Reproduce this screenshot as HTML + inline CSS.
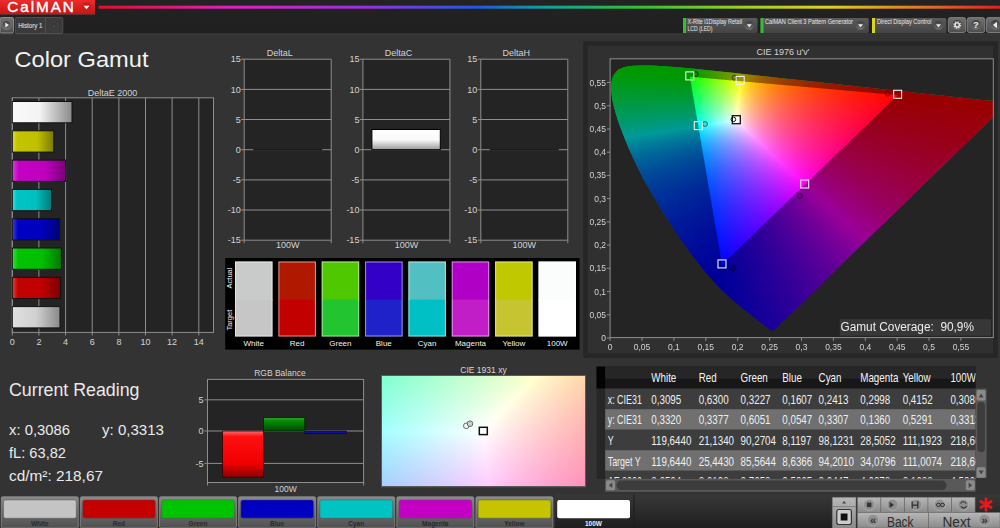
<!DOCTYPE html>
<html><head><meta charset="utf-8">
<style>
html,body{margin:0;padding:0;width:1000px;height:528px;overflow:hidden;background:#333;}
body{position:relative;font-family:"Liberation Sans",sans-serif;}
svg.l{position:absolute;left:0;top:0;}
canvas{position:absolute;}
text{font-family:"Liberation Sans",sans-serif;}
</style></head><body>
<svg class="l" width="1000" height="528" viewBox="0 0 1000 528">
<defs>
  <linearGradient id="topbar" x1="0" y1="0" x2="0" y2="1">
    <stop offset="0" stop-color="#232323"/><stop offset="1" stop-color="#1f1f1f"/>
  </linearGradient>
  <linearGradient id="redbtn" x1="0" y1="0" x2="0" y2="1">
    <stop offset="0" stop-color="#ec2c2c"/><stop offset="1" stop-color="#c81414"/>
  </linearGradient>
  <linearGradient id="rainbow" x1="98" y1="0" x2="1000" y2="0" gradientUnits="userSpaceOnUse">
    <stop offset="0" stop-color="#e0102c"/>
    <stop offset="0.146" stop-color="#e020c0"/>
    <stop offset="0.296" stop-color="#9a30e0"/>
    <stop offset="0.42" stop-color="#2058e0"/>
    <stop offset="0.495" stop-color="#10a0a0"/>
    <stop offset="0.596" stop-color="#30c030"/>
    <stop offset="0.72" stop-color="#a0d020"/>
    <stop offset="0.81" stop-color="#e0d020"/>
    <stop offset="0.92" stop-color="#e07020"/>
    <stop offset="1" stop-color="#e02020"/>
  </linearGradient>
  <linearGradient id="icirc" x1="0" y1="0" x2="0" y2="1"><stop offset="0" stop-color="#3e3e3e"/><stop offset="1" stop-color="#6e6e6e"/></linearGradient>
  <linearGradient id="gbtn" x1="0" y1="0" x2="0" y2="1">
    <stop offset="0" stop-color="#707070"/><stop offset="1" stop-color="#4e4e4e"/>
  </linearGradient>
  <linearGradient id="ddbtn" x1="0" y1="0" x2="0" y2="1">
    <stop offset="0" stop-color="#5a5a5a"/><stop offset="1" stop-color="#444"/>
  </linearGradient>
  <linearGradient id="barW" x1="0" y1="0" x2="1" y2="0">
    <stop offset="0" stop-color="#fafafa"/><stop offset="0.45" stop-color="#f4f4f4"/><stop offset="1" stop-color="#8a8a8a"/>
  </linearGradient>
  <linearGradient id="barY" x1="0" y1="0" x2="1" y2="0">
    <stop offset="0" stop-color="#dada40"/><stop offset="0.12" stop-color="#c4c400"/><stop offset="0.6" stop-color="#c0c000"/><stop offset="1" stop-color="#7a7a00"/>
  </linearGradient>
  <linearGradient id="barM" x1="0" y1="0" x2="1" y2="0">
    <stop offset="0" stop-color="#da40da"/><stop offset="0.12" stop-color="#c400c4"/><stop offset="0.6" stop-color="#c000c0"/><stop offset="1" stop-color="#7a007a"/>
  </linearGradient>
  <linearGradient id="barC" x1="0" y1="0" x2="1" y2="0">
    <stop offset="0" stop-color="#40dada"/><stop offset="0.12" stop-color="#00c4c4"/><stop offset="0.6" stop-color="#00c0c0"/><stop offset="1" stop-color="#007a7a"/>
  </linearGradient>
  <linearGradient id="barB" x1="0" y1="0" x2="1" y2="0">
    <stop offset="0" stop-color="#4040da"/><stop offset="0.12" stop-color="#0000c4"/><stop offset="0.6" stop-color="#0000c0"/><stop offset="1" stop-color="#00007a"/>
  </linearGradient>
  <linearGradient id="barG" x1="0" y1="0" x2="1" y2="0">
    <stop offset="0" stop-color="#40da40"/><stop offset="0.12" stop-color="#00c400"/><stop offset="0.6" stop-color="#00c000"/><stop offset="1" stop-color="#007a00"/>
  </linearGradient>
  <linearGradient id="barR" x1="0" y1="0" x2="1" y2="0">
    <stop offset="0" stop-color="#da4040"/><stop offset="0.12" stop-color="#c40000"/><stop offset="0.6" stop-color="#c00000"/><stop offset="1" stop-color="#7a0000"/>
  </linearGradient>
  <linearGradient id="barL" x1="0" y1="0" x2="1" y2="0">
    <stop offset="0" stop-color="#e0e0e0"/><stop offset="0.5" stop-color="#d0d0d0"/><stop offset="1" stop-color="#8a8a8a"/>
  </linearGradient>
  <linearGradient id="barDC" x1="0" y1="0" x2="0" y2="1">
    <stop offset="0" stop-color="#ffffff"/><stop offset="0.5" stop-color="#fafafa"/><stop offset="1" stop-color="#9a9a9a"/>
  </linearGradient>
  <linearGradient id="rgbR" x1="0" y1="0" x2="0" y2="1">
    <stop offset="0" stop-color="#ff6a6a"/><stop offset="0.12" stop-color="#ff1010"/><stop offset="0.7" stop-color="#f00000"/><stop offset="1" stop-color="#8a0000"/>
  </linearGradient>
  <linearGradient id="rgbG" x1="0" y1="0" x2="0" y2="1">
    <stop offset="0" stop-color="#30a030"/><stop offset="0.3" stop-color="#008a00"/><stop offset="1" stop-color="#004a00"/>
  </linearGradient>
  <linearGradient id="btmbg" x1="0" y1="0" x2="0" y2="1">
    <stop offset="0" stop-color="#383838"/><stop offset="1" stop-color="#1e1e1e"/>
  </linearGradient>
  <linearGradient id="swbtn" x1="0" y1="0" x2="0" y2="1">
    <stop offset="0" stop-color="#8a8a8a"/><stop offset="0.5" stop-color="#6a6a6a"/><stop offset="1" stop-color="#505050"/>
  </linearGradient>
  <linearGradient id="ctlbtn" x1="0" y1="0" x2="0" y2="1">
    <stop offset="0" stop-color="#b8b8b8"/><stop offset="1" stop-color="#8a8a8a"/>
  </linearGradient>
</defs>

<!-- top bar -->
<rect x="0" y="0" width="1000" height="33.5" fill="url(#topbar)"/>
<rect x="0" y="33.5" width="1000" height="1" fill="#3c3c3c"/>
<rect x="0" y="0" width="95" height="14.5" fill="url(#redbtn)"/>
<rect x="0" y="14" width="95" height="1" fill="#5a3030"/>
<text x="7.3" y="12.4" font-size="15.3" fill="#fff" stroke="#fff" stroke-width="0.4" textLength="66.5" lengthAdjust="spacing">CalMAN</text>
<circle cx="86.5" cy="7.2" r="5" fill="#d01a1a"/>
<path d="M83.6 5.8 L89.4 5.8 L86.5 9.2 Z" fill="#fff"/>
<rect x="98.5" y="5.7" width="901.5" height="3" fill="url(#rainbow)"/>

<!-- tabs -->
<rect x="0" y="17.5" width="13.5" height="15.5" rx="1.5" fill="url(#gbtn)" stroke="#9a9a9a" stroke-width="0.8"/>
<circle cx="6.6" cy="25" r="4.6" fill="url(#icirc)" stroke="#8a8a8a" stroke-width="0.5"/>
<path d="M5.3 22.4 L8.9 25 L5.3 27.6 Z" fill="#eee"/>
<rect x="15.3" y="17.5" width="47.5" height="16" rx="1.2" fill="#3a3a3a" stroke="#5e5e5e" stroke-width="0.7"/>
<line x1="45.5" y1="17.8" x2="45.5" y2="33" stroke="#5e5e5e" stroke-width="0.6"/>
<text x="18.2" y="28.3" font-size="7.2" fill="#d0d0d0" stroke="#d0d0d0" stroke-width="0.2" textLength="24.2" lengthAdjust="spacingAndGlyphs">History 1</text>
<circle cx="53.8" cy="26" r="4.2" fill="#383838" stroke="#4a4a4a" stroke-width="0.7"/>
<text x="53.8" y="28.3" font-size="6" fill="#5a5a5a" text-anchor="middle">+</text>

<!-- dropdowns -->
<g>
  <rect x="683" y="18" width="74.6" height="15" rx="1.5" fill="url(#ddbtn)"/>
  <rect x="683" y="18" width="3" height="15" fill="#30c030"/>
  <text x="687.5" y="24.3" font-size="6.6" fill="#e8e8e8" textLength="54.6" lengthAdjust="spacingAndGlyphs">X-Rite i1Display Retail</text>
  <text x="687.5" y="31.2" font-size="6.6" fill="#e8e8e8" textLength="25" lengthAdjust="spacingAndGlyphs">LCD (LED)</text>
  <circle cx="749.3" cy="25.5" r="4.6" fill="url(#icirc)"/>
  <path d="M746.8 24.3 L751.8 24.3 L749.3 27.3 Z" fill="#eee"/>

  <rect x="760.5" y="18" width="108.3" height="15" rx="1.5" fill="url(#ddbtn)"/>
  <rect x="760.5" y="18" width="3" height="15" fill="#30c030"/>
  <text x="765" y="24.3" font-size="6.6" fill="#e8e8e8" textLength="88" lengthAdjust="spacingAndGlyphs">CalMAN Client 3 Pattern Generator</text>
  <circle cx="860.5" cy="25.5" r="4.6" fill="url(#icirc)"/>
  <path d="M858 24.3 L863 24.3 L860.5 27.3 Z" fill="#eee"/>

  <rect x="872" y="18" width="74.4" height="15" rx="1.5" fill="url(#ddbtn)"/>
  <rect x="872" y="18" width="3" height="15" fill="#d8d820"/>
  <text x="877" y="24.3" font-size="6.6" fill="#e8e8e8" textLength="54.4" lengthAdjust="spacingAndGlyphs">Direct Display Control</text>
  <circle cx="938.5" cy="25.5" r="4.6" fill="url(#icirc)"/>
  <path d="M936 24.3 L941 24.3 L938.5 27.3 Z" fill="#eee"/>

  <rect x="948.3" y="17.6" width="17.4" height="14.9" rx="2.2" fill="url(#gbtn)" stroke="#8c8c8c" stroke-width="0.8"/>
  <circle cx="957.2" cy="25" r="4.9" fill="url(#icirc)"/>
  <circle cx="957.2" cy="25" r="2.1" fill="none" stroke="#e8e8e8" stroke-width="1.4"/>
  <circle cx="957.2" cy="25" r="3.2" fill="none" stroke="#e8e8e8" stroke-width="1.3" stroke-dasharray="1.26 1.25"/>
  <rect x="967.2" y="17.6" width="17.6" height="14.9" rx="2.2" fill="url(#gbtn)" stroke="#8c8c8c" stroke-width="0.8"/>
  <circle cx="976" cy="25" r="4.9" fill="url(#icirc)"/>
  <text x="976" y="28.4" font-size="9.5" font-weight="bold" fill="#eee" text-anchor="middle">?</text>
  <rect x="986.4" y="17.6" width="16" height="14.9" rx="2.2" fill="url(#gbtn)" stroke="#8c8c8c" stroke-width="0.8"/>
  <circle cx="995.3" cy="25" r="4.9" fill="url(#icirc)"/>
  <path d="M996.2 22.3 L993 25 L996.2 27.7 Z M996.2 22.3 H997 V27.7 H996.2 Z" fill="#eee"/>
</g>

<!-- Title -->
<text x="14.5" y="67" font-size="22.5" fill="#f2f2f2" textLength="134" lengthAdjust="spacingAndGlyphs">Color Gamut</text>

<!-- DeltaE 2000 chart -->
<text x="112.5" y="95.5" font-size="9" fill="#d4d4d4" text-anchor="middle">DeltaE 2000</text>
<rect x="12.3" y="97.8" width="201.2" height="234.6" fill="#242424"/>
<g stroke="#8e8e8e" stroke-width="1" fill="none">
  <path d="M38.9 97.8V335.5 M65.6 97.8V335.5 M92.2 97.8V335.5 M118.9 97.8V335.5 M145.5 97.8V335.5 M172.1 97.8V335.5 M198.8 97.8V335.5 M12.3 97.8V335.5"/>
  <rect x="12.3" y="97.8" width="201.2" height="234.6"/>
</g>
<g font-size="9" fill="#d4d4d4" text-anchor="middle"><text x="12.3" y="345">0</text><text x="38.9" y="345">2</text><text x="65.6" y="345">4</text><text x="92.2" y="345">6</text><text x="118.9" y="345">8</text><text x="145.5" y="345">10</text><text x="172.1" y="345">12</text><text x="198.8" y="345">14</text></g>
<g stroke="#111" stroke-width="1"><rect x="12.3" y="101.5" width="59.7" height="21.3" fill="url(#barW)"/><rect x="12.3" y="130.8" width="41.5" height="21.3" fill="url(#barY)"/><rect x="12.3" y="160.1" width="53.3" height="21.3" fill="url(#barM)"/><rect x="12.3" y="189.4" width="39.2" height="21.3" fill="url(#barC)"/><rect x="12.3" y="218.7" width="47.4" height="21.3" fill="url(#barB)"/><rect x="12.3" y="248.0" width="49.1" height="21.3" fill="url(#barG)"/><rect x="12.3" y="277.3" width="48.3" height="21.3" fill="url(#barR)"/><rect x="12.3" y="306.6" width="47.7" height="21.3" fill="url(#barL)"/></g>


<text x="279.7" y="56.2" font-size="9" fill="#d4d4d4" text-anchor="middle">DeltaL</text>
<rect x="244.2" y="59.2" width="87" height="181.0" fill="#242424"/>
<path d="M241.2 59.2H331.2 M241.2 89.4H331.2 M241.2 119.5H331.2 M241.2 149.7H331.2 M241.2 179.9H331.2 M241.2 210.0H331.2 M241.2 240.2H331.2 M244.2 59.2V243.2 M331.2 59.2V243.2" stroke="#8e8e8e" stroke-width="1" fill="none"/>
<text x="240.7" y="62.4" font-size="9" fill="#d4d4d4" text-anchor="end">15</text>
<text x="240.7" y="92.6" font-size="9" fill="#d4d4d4" text-anchor="end">10</text>
<text x="240.7" y="122.7" font-size="9" fill="#d4d4d4" text-anchor="end">5</text>
<text x="240.7" y="152.9" font-size="9" fill="#d4d4d4" text-anchor="end">0</text>
<text x="240.7" y="183.1" font-size="9" fill="#d4d4d4" text-anchor="end">-5</text>
<text x="240.7" y="213.2" font-size="9" fill="#d4d4d4" text-anchor="end">-10</text>
<text x="240.7" y="243.4" font-size="9" fill="#d4d4d4" text-anchor="end">-15</text>
<text x="287.7" y="248.4" font-size="9" fill="#d4d4d4" text-anchor="middle">100W</text>
<rect x="253.2" y="149.1" width="69" height="1.2" fill="#111"/>
<text x="398.4" y="56.2" font-size="9" fill="#d4d4d4" text-anchor="middle">DeltaC</text>
<rect x="362.9" y="59.2" width="87" height="181.0" fill="#242424"/>
<path d="M359.9 59.2H449.9 M359.9 89.4H449.9 M359.9 119.5H449.9 M359.9 149.7H449.9 M359.9 179.9H449.9 M359.9 210.0H449.9 M359.9 240.2H449.9 M362.9 59.2V243.2 M449.9 59.2V243.2" stroke="#8e8e8e" stroke-width="1" fill="none"/>
<text x="359.4" y="62.4" font-size="9" fill="#d4d4d4" text-anchor="end">15</text>
<text x="359.4" y="92.6" font-size="9" fill="#d4d4d4" text-anchor="end">10</text>
<text x="359.4" y="122.7" font-size="9" fill="#d4d4d4" text-anchor="end">5</text>
<text x="359.4" y="152.9" font-size="9" fill="#d4d4d4" text-anchor="end">0</text>
<text x="359.4" y="183.1" font-size="9" fill="#d4d4d4" text-anchor="end">-5</text>
<text x="359.4" y="213.2" font-size="9" fill="#d4d4d4" text-anchor="end">-10</text>
<text x="359.4" y="243.4" font-size="9" fill="#d4d4d4" text-anchor="end">-15</text>
<text x="406.4" y="248.4" font-size="9" fill="#d4d4d4" text-anchor="middle">100W</text>
<rect x="371.9" y="129.5" width="68.4" height="20.2" fill="url(#barDC)" stroke="#000" stroke-width="1"/>
<text x="516.3" y="56.2" font-size="9" fill="#d4d4d4" text-anchor="middle">DeltaH</text>
<rect x="480.8" y="59.2" width="87" height="181.0" fill="#242424"/>
<path d="M477.8 59.2H567.8 M477.8 89.4H567.8 M477.8 119.5H567.8 M477.8 149.7H567.8 M477.8 179.9H567.8 M477.8 210.0H567.8 M477.8 240.2H567.8 M480.8 59.2V243.2 M567.8 59.2V243.2" stroke="#8e8e8e" stroke-width="1" fill="none"/>
<text x="477.3" y="62.4" font-size="9" fill="#d4d4d4" text-anchor="end">15</text>
<text x="477.3" y="92.6" font-size="9" fill="#d4d4d4" text-anchor="end">10</text>
<text x="477.3" y="122.7" font-size="9" fill="#d4d4d4" text-anchor="end">5</text>
<text x="477.3" y="152.9" font-size="9" fill="#d4d4d4" text-anchor="end">0</text>
<text x="477.3" y="183.1" font-size="9" fill="#d4d4d4" text-anchor="end">-5</text>
<text x="477.3" y="213.2" font-size="9" fill="#d4d4d4" text-anchor="end">-10</text>
<text x="477.3" y="243.4" font-size="9" fill="#d4d4d4" text-anchor="end">-15</text>
<text x="524.3" y="248.4" font-size="9" fill="#d4d4d4" text-anchor="middle">100W</text>
<rect x="489.8" y="149.1" width="69" height="1.2" fill="#111"/>
<rect x="225.2" y="258" width="354.4" height="91.6" fill="#000"/>
<text transform="translate(232.3,278) rotate(-90)" font-size="7.5" fill="#e8e8e8" text-anchor="middle">Actual</text>
<text transform="translate(232.3,320.2) rotate(-90)" font-size="7.5" fill="#e8e8e8" text-anchor="middle">Target</text>
<rect x="235.0" y="261.5" width="37.5" height="39" fill="#c9cbca"/>
<rect x="235.0" y="299.6" width="37.5" height="36.9" fill="#c6c6c6"/>
<rect x="235.5" y="262" width="36.5" height="74" fill="none" stroke="rgba(255,255,255,0.55)" stroke-width="1"/>
<text x="253.8" y="345.6" font-size="8" fill="#f0f0f0" text-anchor="middle">White</text>
<rect x="278.4" y="261.5" width="37.5" height="39" fill="#b01900"/>
<rect x="278.4" y="299.6" width="37.5" height="36.9" fill="#c20000"/>
<rect x="278.9" y="262" width="36.5" height="74" fill="none" stroke="rgba(255,255,255,0.55)" stroke-width="1"/>
<text x="297.1" y="345.6" font-size="8" fill="#f0f0f0" text-anchor="middle">Red</text>
<rect x="321.7" y="261.5" width="37.5" height="39" fill="#4fc800"/>
<rect x="321.7" y="299.6" width="37.5" height="36.9" fill="#22c430"/>
<rect x="322.2" y="262" width="36.5" height="74" fill="none" stroke="rgba(255,255,255,0.55)" stroke-width="1"/>
<text x="340.4" y="345.6" font-size="8" fill="#f0f0f0" text-anchor="middle">Green</text>
<rect x="365.1" y="261.5" width="37.5" height="39" fill="#3300c8"/>
<rect x="365.1" y="299.6" width="37.5" height="36.9" fill="#1f22c8"/>
<rect x="365.6" y="262" width="36.5" height="74" fill="none" stroke="rgba(255,255,255,0.55)" stroke-width="1"/>
<text x="383.8" y="345.6" font-size="8" fill="#f0f0f0" text-anchor="middle">Blue</text>
<rect x="408.4" y="261.5" width="37.5" height="39" fill="#52c0c2"/>
<rect x="408.4" y="299.6" width="37.5" height="36.9" fill="#00c0c6"/>
<rect x="408.9" y="262" width="36.5" height="74" fill="none" stroke="rgba(255,255,255,0.55)" stroke-width="1"/>
<text x="427.1" y="345.6" font-size="8" fill="#f0f0f0" text-anchor="middle">Cyan</text>
<rect x="451.8" y="261.5" width="37.5" height="39" fill="#b000c6"/>
<rect x="451.8" y="299.6" width="37.5" height="36.9" fill="#c21ec8"/>
<rect x="452.2" y="262" width="36.5" height="74" fill="none" stroke="rgba(255,255,255,0.55)" stroke-width="1"/>
<text x="470.5" y="345.6" font-size="8" fill="#f0f0f0" text-anchor="middle">Magenta</text>
<rect x="495.1" y="261.5" width="37.5" height="39" fill="#c0c800"/>
<rect x="495.1" y="299.6" width="37.5" height="36.9" fill="#c6c430"/>
<rect x="495.6" y="262" width="36.5" height="74" fill="none" stroke="rgba(255,255,255,0.55)" stroke-width="1"/>
<text x="513.9" y="345.6" font-size="8" fill="#f0f0f0" text-anchor="middle">Yellow</text>
<rect x="538.5" y="261.5" width="37.5" height="39" fill="#fbfdfd"/>
<rect x="538.5" y="299.6" width="37.5" height="36.9" fill="#ffffff"/>
<rect x="539.0" y="262" width="36.5" height="74" fill="none" stroke="rgba(255,255,255,0.55)" stroke-width="1"/>
<text x="557.2" y="345.6" font-size="8" fill="#f0f0f0" text-anchor="middle">100W</text>
<text x="9" y="396" font-size="18" fill="#eaeaea" textLength="130.5" lengthAdjust="spacingAndGlyphs">Current Reading</text>
<text x="9" y="435" font-size="14.5" fill="#eaeaea" textLength="61" lengthAdjust="spacingAndGlyphs">x: 0,3086</text>
<text x="102" y="435" font-size="14.5" fill="#eaeaea" textLength="62" lengthAdjust="spacingAndGlyphs">y: 0,3313</text>
<text x="9" y="458" font-size="14.5" fill="#eaeaea" textLength="57" lengthAdjust="spacingAndGlyphs">fL: 63,82</text>
<text x="9" y="481" font-size="14.5" fill="#eaeaea" textLength="94" lengthAdjust="spacingAndGlyphs">cd/m²: 218,67</text>
<text x="279.9" y="376.3" font-size="8.5" fill="#d4d4d4" text-anchor="middle">RGB Balance</text>
<rect x="207.5" y="379.4" width="156.1" height="103.1" fill="#242424" stroke="#8e8e8e" stroke-width="1"/>
<path d="M204.5 399.8H363.6 M204.5 431H363.6 M204.5 463.4H363.6 M207.5 482.5V485.5 M363.6 482.5V485.5" stroke="#8e8e8e" stroke-width="1" fill="none"/>
<text x="203.5" y="403.0" font-size="9" fill="#d4d4d4" text-anchor="end">5</text>
<text x="203.5" y="434.2" font-size="9" fill="#d4d4d4" text-anchor="end">0</text>
<text x="203.5" y="466.6" font-size="9" fill="#d4d4d4" text-anchor="end">-5</text>
<text x="285.6" y="491.7" font-size="8.5" fill="#d4d4d4" text-anchor="middle">100W</text>
<rect x="222.6" y="431" width="40.8" height="46.2" fill="url(#rgbR)" stroke="#300" stroke-width="0.8"/>
<rect x="263.4" y="417.5" width="41.4" height="13.5" fill="url(#rgbG)" stroke="#020" stroke-width="0.8"/>
<rect x="304.8" y="431" width="41.6" height="2.7" fill="#1010a0" stroke="#000040" stroke-width="0.6"/>
<rect x="585.5" y="43.5" width="410" height="312" fill="#303030" stroke="#262626" stroke-width="4.5"/>
<text x="783" y="55" font-size="9" fill="#d4d4d4" text-anchor="middle">CIE 1976 u'v'</text>
<rect x="610.1" y="58.8" width="383.2" height="278.6" fill="#242424"/>
<clipPath id="plotclip"><rect x="610.1" y="58.8" width="383.2" height="278.8"/></clipPath>
<linearGradient id="fbL" x1="0" y1="0" x2="0" y2="1"><stop offset="0" stop-color="#089a10"/><stop offset="0.4" stop-color="#0a9090"/><stop offset="0.75" stop-color="#1010a0"/><stop offset="1" stop-color="#4000a0"/></linearGradient>
<linearGradient id="fbT" x1="0" y1="0" x2="1" y2="0"><stop offset="0" stop-color="#00ff60"/><stop offset="0.5" stop-color="#ffffff"/><stop offset="1" stop-color="#ff2020"/></linearGradient>
<g clip-path="url(#plotclip)"><polygon points="773.9,330.3 773.8,330.3 773.7,330.4 773.5,330.4 773.2,330.6 772.9,330.6 772.5,330.6 771.9,330.6 771.0,330.2 769.3,329.1 767.1,327.5 763.9,325.0 759.8,321.7 754.7,317.7 747.9,312.5 739.8,306.1 729.8,297.5 717.9,286.0 702.0,267.9 683.3,243.1 662.9,212.2 643.4,178.8 628.1,146.8 617.7,119.8 612.3,99.7 611.0,85.7 613.1,76.1 617.9,70.0 624.8,66.9 633.1,65.7 642.0,65.5 651.1,65.6 660.6,66.0 670.9,66.7 682.0,67.6 694.2,68.8 707.8,70.2 722.7,71.8 739.3,73.5 757.6,75.5 777.4,77.7 798.9,80.0 821.6,82.5 844.9,85.0 867.5,87.5 889.5,89.9 909.4,92.0 927.0,93.9 942.0,95.6 954.5,96.9 965.1,98.1 974.3,99.1 982.0,99.9 988.3,100.6 993.2,101.1 996.9,101.6 999.8,101.9 1001.6,102.1 1003.1,102.2 1005.5,102.5 1007.2,102.7 1007.8,102.7" fill="url(#fbL)"/>
<linearGradient id="fbP" x1="1" y1="0" x2="0" y2="1"><stop offset="0" stop-color="#a00010"/><stop offset="0.5" stop-color="#900090"/><stop offset="1" stop-color="#2000a0"/></linearGradient>
<polygon points="897.6,95.1 1007.8,102.7 773.9,330.3 722.0,264.7" fill="url(#fbP)"/>
<radialGradient id="fbW" cx="0.3" cy="0.35" r="0.5"><stop offset="0" stop-color="#fff" stop-opacity="0.9"/><stop offset="1" stop-color="#fff" stop-opacity="0"/></radialGradient>
<linearGradient id="fbT2" x1="0" y1="0" x2="0" y2="1"><stop offset="0" stop-color="#00ff00" stop-opacity="0"/><stop offset="0.6" stop-color="#ff00ff" stop-opacity="0.6"/><stop offset="1" stop-color="#0000ff"/></linearGradient>
<polygon points="897.6,95.1 689.8,76.7 722.0,264.7" fill="url(#fbT)"/><polygon points="897.6,95.1 689.8,76.7 722.0,264.7" fill="url(#fbT2)"/><polygon points="897.6,95.1 689.8,76.7 722.0,264.7" fill="url(#fbW)"/></g>
<text x="483.5" y="372.5" font-size="8.5" fill="#d8d8d8" text-anchor="middle">CIE 1931 xy</text>
<rect x="381" y="375" width="205" height="112.3" fill="#5a5a5a"/>
<linearGradient id="fb31" x1="0" y1="0" x2="1" y2="1"><stop offset="0" stop-color="#88ffcc"/><stop offset="0.5" stop-color="#f8f8f8"/><stop offset="1" stop-color="#ff98c0"/></linearGradient>
<rect x="382" y="376" width="203" height="110" fill="url(#fb31)"/>
<rect x="596.6" y="366.6" width="379" height="22" fill="#171717"/>
<rect x="596.6" y="366.6" width="379" height="12" fill="#262626"/>
<rect x="596.6" y="366.6" width="8.5" height="22" fill="#030303"/>
<svg x="0" y="0" width="975.6" height="478.8" overflow="hidden">
<rect x="605.1" y="388.6" width="371" height="20.55" fill="#3d3d3d"/>
<rect x="596.6" y="388.6" width="8.5" height="20.55" fill="#262626"/>
<rect x="605.1" y="409.2" width="371" height="20.55" fill="#707070"/>
<rect x="596.6" y="409.2" width="8.5" height="20.55" fill="#262626"/>
<rect x="605.1" y="429.7" width="371" height="20.55" fill="#3d3d3d"/>
<rect x="596.6" y="429.7" width="8.5" height="20.55" fill="#262626"/>
<rect x="605.1" y="450.2" width="371" height="20.55" fill="#707070"/>
<rect x="596.6" y="450.2" width="8.5" height="20.55" fill="#262626"/>
<rect x="605.1" y="470.8" width="371" height="20.55" fill="#3d3d3d"/>
<rect x="596.6" y="470.8" width="8.5" height="20.55" fill="#262626"/>
<text x="607.7" y="403.9" font-size="12.4" fill="#eeeeee" transform="translate(607.7 0) scale(0.72 1) translate(-607.7 0)">x: CIE31</text>
<text x="651.3" y="403.9" font-size="12.4" fill="#eeeeee" transform="translate(651.3 0) scale(0.79 1) translate(-651.3 0)">0,3095</text>
<text x="698.7" y="403.9" font-size="12.4" fill="#eeeeee" transform="translate(698.7 0) scale(0.79 1) translate(-698.7 0)">0,6300</text>
<text x="740.6" y="403.9" font-size="12.4" fill="#eeeeee" transform="translate(740.6 0) scale(0.79 1) translate(-740.6 0)">0,3227</text>
<text x="782.3" y="403.9" font-size="12.4" fill="#eeeeee" transform="translate(782.3 0) scale(0.79 1) translate(-782.3 0)">0,1607</text>
<text x="818.6" y="403.9" font-size="12.4" fill="#eeeeee" transform="translate(818.6 0) scale(0.79 1) translate(-818.6 0)">0,2413</text>
<text x="860.3" y="403.9" font-size="12.4" fill="#eeeeee" transform="translate(860.3 0) scale(0.79 1) translate(-860.3 0)">0,2998</text>
<text x="902.7" y="403.9" font-size="12.4" fill="#eeeeee" transform="translate(902.7 0) scale(0.79 1) translate(-902.7 0)">0,4152</text>
<text x="950.4" y="403.9" font-size="12.4" fill="#eeeeee" transform="translate(950.4 0) scale(0.79 1) translate(-950.4 0)">0,3086</text>
<text x="607.7" y="424.5" font-size="12.4" fill="#eeeeee" transform="translate(607.7 0) scale(0.72 1) translate(-607.7 0)">y: CIE31</text>
<text x="651.3" y="424.5" font-size="12.4" fill="#eeeeee" transform="translate(651.3 0) scale(0.79 1) translate(-651.3 0)">0,3320</text>
<text x="698.7" y="424.5" font-size="12.4" fill="#eeeeee" transform="translate(698.7 0) scale(0.79 1) translate(-698.7 0)">0,3377</text>
<text x="740.6" y="424.5" font-size="12.4" fill="#eeeeee" transform="translate(740.6 0) scale(0.79 1) translate(-740.6 0)">0,6051</text>
<text x="782.3" y="424.5" font-size="12.4" fill="#eeeeee" transform="translate(782.3 0) scale(0.79 1) translate(-782.3 0)">0,0547</text>
<text x="818.6" y="424.5" font-size="12.4" fill="#eeeeee" transform="translate(818.6 0) scale(0.79 1) translate(-818.6 0)">0,3307</text>
<text x="860.3" y="424.5" font-size="12.4" fill="#eeeeee" transform="translate(860.3 0) scale(0.79 1) translate(-860.3 0)">0,1360</text>
<text x="902.7" y="424.5" font-size="12.4" fill="#eeeeee" transform="translate(902.7 0) scale(0.79 1) translate(-902.7 0)">0,5291</text>
<text x="950.4" y="424.5" font-size="12.4" fill="#eeeeee" transform="translate(950.4 0) scale(0.79 1) translate(-950.4 0)">0,3313</text>
<text x="607.7" y="445.0" font-size="12.4" fill="#eeeeee" transform="translate(607.7 0) scale(0.72 1) translate(-607.7 0)">Y</text>
<text x="651.3" y="445.0" font-size="12.4" fill="#eeeeee" transform="translate(651.3 0) scale(0.79 1) translate(-651.3 0)">119,6440</text>
<text x="698.7" y="445.0" font-size="12.4" fill="#eeeeee" transform="translate(698.7 0) scale(0.79 1) translate(-698.7 0)">21,1340</text>
<text x="740.6" y="445.0" font-size="12.4" fill="#eeeeee" transform="translate(740.6 0) scale(0.79 1) translate(-740.6 0)">90,2704</text>
<text x="782.3" y="445.0" font-size="12.4" fill="#eeeeee" transform="translate(782.3 0) scale(0.79 1) translate(-782.3 0)">8,1197</text>
<text x="818.6" y="445.0" font-size="12.4" fill="#eeeeee" transform="translate(818.6 0) scale(0.79 1) translate(-818.6 0)">98,1231</text>
<text x="860.3" y="445.0" font-size="12.4" fill="#eeeeee" transform="translate(860.3 0) scale(0.79 1) translate(-860.3 0)">28,5052</text>
<text x="902.7" y="445.0" font-size="12.4" fill="#eeeeee" transform="translate(902.7 0) scale(0.79 1) translate(-902.7 0)">111,1923</text>
<text x="950.4" y="445.0" font-size="12.4" fill="#eeeeee" transform="translate(950.4 0) scale(0.79 1) translate(-950.4 0)">218,6675</text>
<text x="607.7" y="465.6" font-size="12.4" fill="#eeeeee" transform="translate(607.7 0) scale(0.72 1) translate(-607.7 0)">Target Y</text>
<text x="651.3" y="465.6" font-size="12.4" fill="#eeeeee" transform="translate(651.3 0) scale(0.79 1) translate(-651.3 0)">119,6440</text>
<text x="698.7" y="465.6" font-size="12.4" fill="#eeeeee" transform="translate(698.7 0) scale(0.79 1) translate(-698.7 0)">25,4430</text>
<text x="740.6" y="465.6" font-size="12.4" fill="#eeeeee" transform="translate(740.6 0) scale(0.79 1) translate(-740.6 0)">85,5644</text>
<text x="782.3" y="465.6" font-size="12.4" fill="#eeeeee" transform="translate(782.3 0) scale(0.79 1) translate(-782.3 0)">8,6366</text>
<text x="818.6" y="465.6" font-size="12.4" fill="#eeeeee" transform="translate(818.6 0) scale(0.79 1) translate(-818.6 0)">94,2010</text>
<text x="860.3" y="465.6" font-size="12.4" fill="#eeeeee" transform="translate(860.3 0) scale(0.79 1) translate(-860.3 0)">34,0796</text>
<text x="902.7" y="465.6" font-size="12.4" fill="#eeeeee" transform="translate(902.7 0) scale(0.79 1) translate(-902.7 0)">111,0074</text>
<text x="950.4" y="465.6" font-size="12.4" fill="#eeeeee" transform="translate(950.4 0) scale(0.79 1) translate(-950.4 0)">218,6675</text>
<text x="607.7" y="486.1" font-size="12.4" fill="#eeeeee" transform="translate(607.7 0) scale(0.72 1) translate(-607.7 0)">ΔE 2000</text>
<text x="651.3" y="486.1" font-size="12.4" fill="#eeeeee" transform="translate(651.3 0) scale(0.79 1) translate(-651.3 0)">3,6504</text>
<text x="698.7" y="486.1" font-size="12.4" fill="#eeeeee" transform="translate(698.7 0) scale(0.79 1) translate(-698.7 0)">3,6198</text>
<text x="740.6" y="486.1" font-size="12.4" fill="#eeeeee" transform="translate(740.6 0) scale(0.79 1) translate(-740.6 0)">3,7658</text>
<text x="782.3" y="486.1" font-size="12.4" fill="#eeeeee" transform="translate(782.3 0) scale(0.79 1) translate(-782.3 0)">3,5065</text>
<text x="818.6" y="486.1" font-size="12.4" fill="#eeeeee" transform="translate(818.6 0) scale(0.79 1) translate(-818.6 0)">3,0447</text>
<text x="860.3" y="486.1" font-size="12.4" fill="#eeeeee" transform="translate(860.3 0) scale(0.79 1) translate(-860.3 0)">4,0078</text>
<text x="902.7" y="486.1" font-size="12.4" fill="#eeeeee" transform="translate(902.7 0) scale(0.79 1) translate(-902.7 0)">3,1688</text>
<text x="950.4" y="486.1" font-size="12.4" fill="#eeeeee" transform="translate(950.4 0) scale(0.79 1) translate(-950.4 0)">4,5369</text>
<text x="651.3" y="382.3" font-size="12.4" fill="#f4f4f4" transform="translate(651.3 0) scale(0.79 1) translate(-651.3 0)">White</text>
<text x="698.7" y="382.3" font-size="12.4" fill="#f4f4f4" transform="translate(698.7 0) scale(0.79 1) translate(-698.7 0)">Red</text>
<text x="740.6" y="382.3" font-size="12.4" fill="#f4f4f4" transform="translate(740.6 0) scale(0.79 1) translate(-740.6 0)">Green</text>
<text x="782.3" y="382.3" font-size="12.4" fill="#f4f4f4" transform="translate(782.3 0) scale(0.79 1) translate(-782.3 0)">Blue</text>
<text x="818.6" y="382.3" font-size="12.4" fill="#f4f4f4" transform="translate(818.6 0) scale(0.79 1) translate(-818.6 0)">Cyan</text>
<text x="860.3" y="382.3" font-size="12.4" fill="#f4f4f4" transform="translate(860.3 0) scale(0.79 1) translate(-860.3 0)">Magenta</text>
<text x="902.7" y="382.3" font-size="12.4" fill="#f4f4f4" transform="translate(902.7 0) scale(0.79 1) translate(-902.7 0)">Yellow</text>
<text x="950.4" y="382.3" font-size="12.4" fill="#f4f4f4" transform="translate(950.4 0) scale(0.79 1) translate(-950.4 0)">100W</text>
</svg>
<rect x="975.6" y="388.6" width="11" height="89.4" fill="#595959"/>
<rect x="976.6" y="390" width="9" height="10.5" rx="1.5" fill="#8a8a8a"/>
<path d="M978.6 397.6 L981.1 393.4 L983.6 397.6 Z" fill="#444"/>
<rect x="977.3" y="402" width="7.6" height="50" rx="3.5" fill="#3c3c3c"/>
<rect x="976.6" y="467.2" width="9" height="10.5" rx="1.5" fill="#8a8a8a"/>
<path d="M978.6 470.4 L981.1 474.6 L983.6 470.4 Z" fill="#444"/>
<rect x="605.1" y="478.8" width="370.5" height="13" fill="#595959"/>
<rect x="606.1" y="480.3" width="9" height="10" rx="1.5" fill="#8a8a8a"/>
<path d="M612.3 482.5 L608.8 485.3 L612.3 488.1 Z" fill="#444"/>
<rect x="616.5" y="480.6" width="330" height="9.4" rx="4.5" fill="#3c3c3c"/>
<rect x="965.8" y="480.3" width="9" height="10" rx="1.5" fill="#8a8a8a"/>
<path d="M968.6 482.5 L972.1 485.3 L968.6 488.1 Z" fill="#444"/>
<rect x="555" y="494.5" width="445" height="33.5" fill="url(#btmbg)"/>
<rect x="633.5" y="494.5" width="1" height="33.5" fill="#1c1c1c"/>
<rect x="1.3" y="496.7" width="77" height="31.3" rx="1.5" fill="url(#swbtn)" stroke="#9a9a9a" stroke-width="0.6"/>
<rect x="3.5" y="499.9" width="72.8" height="18.3" rx="2" fill="#c4c4c4" stroke="#555" stroke-width="0.5"/>
<text x="39.8" y="526.4" font-size="6.5" font-weight="bold" fill="#2a2a2a" text-anchor="middle">White</text>
<rect x="80.4" y="496.7" width="77" height="31.3" rx="1.5" fill="url(#swbtn)" stroke="#9a9a9a" stroke-width="0.6"/>
<rect x="82.6" y="499.9" width="72.8" height="18.3" rx="2" fill="#c40000" stroke="#555" stroke-width="0.5"/>
<text x="118.9" y="526.4" font-size="6.5" font-weight="bold" fill="#2a2a2a" text-anchor="middle">Red</text>
<rect x="159.5" y="496.7" width="77" height="31.3" rx="1.5" fill="url(#swbtn)" stroke="#9a9a9a" stroke-width="0.6"/>
<rect x="161.7" y="499.9" width="72.8" height="18.3" rx="2" fill="#00c400" stroke="#555" stroke-width="0.5"/>
<text x="198.0" y="526.4" font-size="6.5" font-weight="bold" fill="#2a2a2a" text-anchor="middle">Green</text>
<rect x="238.6" y="496.7" width="77" height="31.3" rx="1.5" fill="url(#swbtn)" stroke="#9a9a9a" stroke-width="0.6"/>
<rect x="240.8" y="499.9" width="72.8" height="18.3" rx="2" fill="#0000c0" stroke="#555" stroke-width="0.5"/>
<text x="277.1" y="526.4" font-size="6.5" font-weight="bold" fill="#2a2a2a" text-anchor="middle">Blue</text>
<rect x="317.7" y="496.7" width="77" height="31.3" rx="1.5" fill="url(#swbtn)" stroke="#9a9a9a" stroke-width="0.6"/>
<rect x="319.9" y="499.9" width="72.8" height="18.3" rx="2" fill="#00c4c4" stroke="#555" stroke-width="0.5"/>
<text x="356.2" y="526.4" font-size="6.5" font-weight="bold" fill="#2a2a2a" text-anchor="middle">Cyan</text>
<rect x="396.8" y="496.7" width="77" height="31.3" rx="1.5" fill="url(#swbtn)" stroke="#9a9a9a" stroke-width="0.6"/>
<rect x="399.0" y="499.9" width="72.8" height="18.3" rx="2" fill="#c400c4" stroke="#555" stroke-width="0.5"/>
<text x="435.3" y="526.4" font-size="6.5" font-weight="bold" fill="#2a2a2a" text-anchor="middle">Magenta</text>
<rect x="475.9" y="496.7" width="77" height="31.3" rx="1.5" fill="url(#swbtn)" stroke="#9a9a9a" stroke-width="0.6"/>
<rect x="478.1" y="499.9" width="72.8" height="18.3" rx="2" fill="#c4c400" stroke="#555" stroke-width="0.5"/>
<text x="514.4" y="526.4" font-size="6.5" font-weight="bold" fill="#2a2a2a" text-anchor="middle">Yellow</text>
<rect x="557.2" y="499.9" width="72.8" height="18.3" rx="2" fill="#ffffff"/>
<text x="593.5" y="526.4" font-size="6.5" font-weight="bold" fill="#f0f0f0" text-anchor="middle">100W</text>
<rect x="832.2" y="497.2" width="23.8" height="31" fill="url(#ctlbtn)" stroke="#666" stroke-width="0.5"/>
<line x1="832.2" y1="506.6" x2="856" y2="506.6" stroke="#666" stroke-width="0.6"/>
<path d="M842 503.5 L844.1 501 L846.2 503.5 Z" fill="#444"/>
<rect x="836.8" y="509.5" width="14.6" height="15" rx="2" fill="#ccc" stroke="#333" stroke-width="1.2"/>
<rect x="840.7" y="513.5" width="6.8" height="7" fill="#111"/>
<rect x="857.4" y="497.2" width="23.5" height="15.3" fill="url(#ctlbtn)" stroke="#666" stroke-width="0.5"/>
<circle cx="869.1" cy="504.9" r="5.6" fill="#8e8e8e" stroke="#b4b4b4" stroke-width="0.7"/>
<rect x="880.9" y="497.2" width="23.5" height="15.3" fill="url(#ctlbtn)" stroke="#666" stroke-width="0.5"/>
<circle cx="892.6" cy="504.9" r="5.6" fill="#8e8e8e" stroke="#b4b4b4" stroke-width="0.7"/>
<rect x="904.5" y="497.2" width="23.5" height="15.3" fill="url(#ctlbtn)" stroke="#666" stroke-width="0.5"/>
<circle cx="916.2" cy="504.9" r="5.6" fill="#8e8e8e" stroke="#b4b4b4" stroke-width="0.7"/>
<rect x="928.0" y="497.2" width="23.5" height="15.3" fill="url(#ctlbtn)" stroke="#666" stroke-width="0.5"/>
<circle cx="939.7" cy="504.9" r="5.6" fill="#8e8e8e" stroke="#b4b4b4" stroke-width="0.7"/>
<rect x="951.6" y="497.2" width="23.5" height="15.3" fill="url(#ctlbtn)" stroke="#666" stroke-width="0.5"/>
<circle cx="963.3" cy="504.9" r="5.6" fill="#8e8e8e" stroke="#b4b4b4" stroke-width="0.7"/>
<rect x="866.9" y="502.6" width="4.5" height="4.5" fill="#333"/>
<path d="M889.6 501.8 L894 504.9 L889.6 508 Z" fill="#333"/>
<path d="M912.2 501.3V508.5 M917.8 501.3V508.5 M912.2 505.2H917.8" stroke="#333" stroke-width="1.3" fill="none"/>
<path d="M936.5 504.9 a2 1.6 0 1 0 4 0 a2 1.6 0 1 0 4 0 a2 1.6 0 1 0 -4 0 a2 1.6 0 1 0 -4 0" stroke="#333" stroke-width="1" fill="none"/>
<path d="M960.5 503.5 a3 3 0 0 1 5.5 0 M966.5 506.3 a3 3 0 0 1 -5.5 0" stroke="#333" stroke-width="1.1" fill="none"/>
<rect x="857.4" y="512.5" width="71.1" height="15.5" fill="url(#ctlbtn)" stroke="#666" stroke-width="0.5"/>
<rect x="928.5" y="512.5" width="71.5" height="15.5" fill="url(#ctlbtn)" stroke="#666" stroke-width="0.5"/>
<circle cx="873" cy="520.3" r="5.8" fill="#8e8e8e" stroke="#b4b4b4" stroke-width="0.7"/><text x="873" y="524" font-size="11" font-weight="bold" fill="#333" text-anchor="middle">«</text>
<circle cx="984.5" cy="520.3" r="5.8" fill="#8e8e8e" stroke="#b4b4b4" stroke-width="0.7"/><text x="984.5" y="524" font-size="11" font-weight="bold" fill="#333" text-anchor="middle">»</text>
<text x="887" y="526.5" font-size="14" fill="#2e2e2e" textLength="26.5" lengthAdjust="spacingAndGlyphs">Back</text>
<text x="942.5" y="526.5" font-size="14" fill="#2e2e2e" textLength="28" lengthAdjust="spacingAndGlyphs">Next</text>
<g stroke="#e81818" stroke-width="2.6" stroke-linecap="butt"><path d="M986 497.5V511.5 M979.9 501 L992.1 508 M979.9 508 L992.1 501"/></g>
</svg>
<canvas id="cie76" width="383" height="279" style="left:610px;top:59px;width:383px;height:279px"></canvas>
<canvas id="cie31" width="203" height="110" style="left:382px;top:376px;width:203px;height:110px"></canvas>
<svg class="l" width="1000" height="528" viewBox="0 0 1000 528">
<rect x="610.1" y="58.8" width="383.2" height="278.8" fill="none" stroke="#8e8e8e" stroke-width="1"/>
<line x1="610.1" y1="337.6" x2="610.1" y2="340.8" stroke="#8e8e8e" stroke-width="1"/>
<text x="610.1" y="350.4" font-size="8.5" fill="#d4d4d4" text-anchor="middle">0</text>
<line x1="642.0" y1="337.6" x2="642.0" y2="340.8" stroke="#8e8e8e" stroke-width="1"/>
<text x="642.0" y="350.4" font-size="8.5" fill="#d4d4d4" text-anchor="middle">0,05</text>
<line x1="673.9" y1="337.6" x2="673.9" y2="340.8" stroke="#8e8e8e" stroke-width="1"/>
<text x="673.9" y="350.4" font-size="8.5" fill="#d4d4d4" text-anchor="middle">0,1</text>
<line x1="705.8" y1="337.6" x2="705.8" y2="340.8" stroke="#8e8e8e" stroke-width="1"/>
<text x="705.8" y="350.4" font-size="8.5" fill="#d4d4d4" text-anchor="middle">0,15</text>
<line x1="737.7" y1="337.6" x2="737.7" y2="340.8" stroke="#8e8e8e" stroke-width="1"/>
<text x="737.7" y="350.4" font-size="8.5" fill="#d4d4d4" text-anchor="middle">0,2</text>
<line x1="769.6" y1="337.6" x2="769.6" y2="340.8" stroke="#8e8e8e" stroke-width="1"/>
<text x="769.6" y="350.4" font-size="8.5" fill="#d4d4d4" text-anchor="middle">0,25</text>
<line x1="801.5" y1="337.6" x2="801.5" y2="340.8" stroke="#8e8e8e" stroke-width="1"/>
<text x="801.5" y="350.4" font-size="8.5" fill="#d4d4d4" text-anchor="middle">0,3</text>
<line x1="833.4" y1="337.6" x2="833.4" y2="340.8" stroke="#8e8e8e" stroke-width="1"/>
<text x="833.4" y="350.4" font-size="8.5" fill="#d4d4d4" text-anchor="middle">0,35</text>
<line x1="865.3" y1="337.6" x2="865.3" y2="340.8" stroke="#8e8e8e" stroke-width="1"/>
<text x="865.3" y="350.4" font-size="8.5" fill="#d4d4d4" text-anchor="middle">0,4</text>
<line x1="897.2" y1="337.6" x2="897.2" y2="340.8" stroke="#8e8e8e" stroke-width="1"/>
<text x="897.2" y="350.4" font-size="8.5" fill="#d4d4d4" text-anchor="middle">0,45</text>
<line x1="929.0" y1="337.6" x2="929.0" y2="340.8" stroke="#8e8e8e" stroke-width="1"/>
<text x="929.0" y="350.4" font-size="8.5" fill="#d4d4d4" text-anchor="middle">0,5</text>
<line x1="960.9" y1="337.6" x2="960.9" y2="340.8" stroke="#8e8e8e" stroke-width="1"/>
<text x="960.9" y="350.4" font-size="8.5" fill="#d4d4d4" text-anchor="middle">0,55</text>
<line x1="606.9" y1="338.0" x2="610.1" y2="338.0" stroke="#8e8e8e" stroke-width="1"/>
<text x="606" y="341.0" font-size="8.5" fill="#d4d4d4" text-anchor="end">0</text>
<line x1="606.9" y1="314.8" x2="610.1" y2="314.8" stroke="#8e8e8e" stroke-width="1"/>
<text x="606" y="317.8" font-size="8.5" fill="#d4d4d4" text-anchor="end">0,05</text>
<line x1="606.9" y1="291.6" x2="610.1" y2="291.6" stroke="#8e8e8e" stroke-width="1"/>
<text x="606" y="294.6" font-size="8.5" fill="#d4d4d4" text-anchor="end">0,1</text>
<line x1="606.9" y1="268.3" x2="610.1" y2="268.3" stroke="#8e8e8e" stroke-width="1"/>
<text x="606" y="271.3" font-size="8.5" fill="#d4d4d4" text-anchor="end">0,15</text>
<line x1="606.9" y1="245.1" x2="610.1" y2="245.1" stroke="#8e8e8e" stroke-width="1"/>
<text x="606" y="248.1" font-size="8.5" fill="#d4d4d4" text-anchor="end">0,2</text>
<line x1="606.9" y1="221.9" x2="610.1" y2="221.9" stroke="#8e8e8e" stroke-width="1"/>
<text x="606" y="224.9" font-size="8.5" fill="#d4d4d4" text-anchor="end">0,25</text>
<line x1="606.9" y1="198.6" x2="610.1" y2="198.6" stroke="#8e8e8e" stroke-width="1"/>
<text x="606" y="201.6" font-size="8.5" fill="#d4d4d4" text-anchor="end">0,3</text>
<line x1="606.9" y1="175.4" x2="610.1" y2="175.4" stroke="#8e8e8e" stroke-width="1"/>
<text x="606" y="178.4" font-size="8.5" fill="#d4d4d4" text-anchor="end">0,35</text>
<line x1="606.9" y1="152.2" x2="610.1" y2="152.2" stroke="#8e8e8e" stroke-width="1"/>
<text x="606" y="155.2" font-size="8.5" fill="#d4d4d4" text-anchor="end">0,4</text>
<line x1="606.9" y1="129.0" x2="610.1" y2="129.0" stroke="#8e8e8e" stroke-width="1"/>
<text x="606" y="132.0" font-size="8.5" fill="#d4d4d4" text-anchor="end">0,45</text>
<line x1="606.9" y1="105.8" x2="610.1" y2="105.8" stroke="#8e8e8e" stroke-width="1"/>
<text x="606" y="108.8" font-size="8.5" fill="#d4d4d4" text-anchor="end">0,5</text>
<line x1="606.9" y1="82.5" x2="610.1" y2="82.5" stroke="#8e8e8e" stroke-width="1"/>
<text x="606" y="85.5" font-size="8.5" fill="#d4d4d4" text-anchor="end">0,55</text>
<circle cx="887.6" cy="93.5" r="2.5" fill="rgba(0,0,0,0.12)" stroke="rgba(0,0,0,0.6)" stroke-width="0.8"/>
<circle cx="695.7" cy="74.1" r="2.5" fill="rgba(0,0,0,0.12)" stroke="rgba(0,0,0,0.6)" stroke-width="0.8"/>
<circle cx="733.1" cy="268.6" r="2.5" fill="rgba(0,0,0,0.12)" stroke="rgba(0,0,0,0.6)" stroke-width="0.8"/>
<circle cx="705.0" cy="124.0" r="2.5" fill="rgba(0,0,0,0.12)" stroke="rgba(0,0,0,0.6)" stroke-width="0.8"/>
<circle cx="799.8" cy="196.2" r="2.5" fill="rgba(0,0,0,0.12)" stroke="rgba(0,0,0,0.6)" stroke-width="0.8"/>
<circle cx="734.5" cy="77.6" r="2.5" fill="rgba(0,0,0,0.12)" stroke="rgba(0,0,0,0.6)" stroke-width="0.8"/>
<rect x="893.6" y="90.3" width="8" height="8" fill="none" stroke="#eee" stroke-width="1.1"/>
<rect x="685.8" y="71.9" width="8" height="8" fill="none" stroke="#eee" stroke-width="1.1"/>
<rect x="718.0" y="259.9" width="8" height="8" fill="none" stroke="#eee" stroke-width="1.1"/>
<rect x="694.3" y="121.6" width="8" height="8" fill="none" stroke="#eee" stroke-width="1.1"/>
<rect x="800.7" y="180.0" width="8" height="8" fill="none" stroke="#eee" stroke-width="1.1"/>
<rect x="736.2" y="76.4" width="8" height="8" fill="none" stroke="#eee" stroke-width="1.1"/>
<rect x="732.3" y="115.7" width="8" height="8" fill="#fff" stroke="#111" stroke-width="1.3"/>
<circle cx="733.4" cy="119.4" r="2.3" fill="none" stroke="#111" stroke-width="1"/>
<rect x="839.8" y="319.2" width="151.2" height="16.6" fill="#3a3a3a" fill-opacity="0.9"/>
<text x="840.5" y="331.2" font-size="12" fill="#eeeeee" textLength="133.4" lengthAdjust="spacingAndGlyphs">Gamut Coverage:&#160; 90,9%</text>
<circle cx="466.3" cy="425.8" r="2.8" fill="#f8f8f8" stroke="#555" stroke-width="0.9"/>
<circle cx="470" cy="423.7" r="2.8" fill="#e2e2e2" stroke="#555" stroke-width="0.9"/><circle cx="470" cy="423.7" r="1.3" fill="none" stroke="#999" stroke-width="0.5"/>
<rect x="479.3" y="427.3" width="8" height="7.3" fill="none" stroke="#111" stroke-width="1.5"/>
</svg>
<script>
(function(){
var L=[[0.1741,0.0050],[0.1740,0.0050],[0.1738,0.0049],[0.1736,0.0049],[0.1733,0.0048],[0.1730,0.0048],[0.1726,0.0048],[0.1721,0.0048],[0.1714,0.0051],[0.1703,0.0058],[0.1689,0.0069],[0.1669,0.0086],[0.1644,0.0109],[0.1611,0.0138],[0.1566,0.0177],[0.1510,0.0227],[0.1440,0.0297],[0.1355,0.0399],[0.1241,0.0578],[0.1096,0.0868],[0.0913,0.1327],[0.0687,0.2007],[0.0454,0.2950],[0.0235,0.4127],[0.0082,0.5384],[0.0039,0.6548],[0.0139,0.7502],[0.0389,0.8120],[0.0743,0.8338],[0.1142,0.8262],[0.1547,0.8059],[0.1929,0.7816],[0.2296,0.7543],[0.2658,0.7243],[0.3016,0.6923],[0.3373,0.6589],[0.3731,0.6245],[0.4087,0.5896],[0.4441,0.5547],[0.4788,0.5202],[0.5125,0.4866],[0.5448,0.4544],[0.5752,0.4242],[0.6029,0.3965],[0.6270,0.3725],[0.6482,0.3514],[0.6658,0.3340],[0.6801,0.3197],[0.6915,0.3083],[0.7006,0.2993],[0.7079,0.2920],[0.7140,0.2859],[0.7190,0.2809],[0.7230,0.2770],[0.7260,0.2740],[0.7283,0.2717],[0.7300,0.2700],[0.7311,0.2689],[0.7320,0.2680],[0.7334,0.2666],[0.7344,0.2656],[0.7347,0.2653]];
function uv(x,y){var d=-2*x+12*y+3;return [4*x/d,9*y/d];}
var X0=610.1,Y0=338.0,US=637.9,VS=464.5, CL=610, CT=59;
var GP=1.0;var GI=window.CIEGAM||0.85;function gam(c){c=Math.max(0,Math.min(1,c));return Math.pow(c,GP);}
function rgbOf(x,y){
  var X=x/y,Y=1,Z=(1-x-y)/y;
  var r=3.2406*X-1.5372*Y-0.4986*Z, g=-0.9689*X+1.8758*Y+0.0415*Z, b=0.0557*X-0.2040*Y+1.0570*Z;
  return [r,g,b];
}
var DARK=window.CIEDARK||0.6;
var cv=document.getElementById('cie76');
if(cv&&cv.getContext){
  var ctx=cv.getContext('2d');
  var W=cv.width,H=cv.height;
  // build clip path of locus
  ctx.save();
  ctx.beginPath();
  var P=[];for(var i=0;i<L.length;i++){var p=uv(L[i][0],L[i][1]);P.push([X0+p[0]*US-CL,Y0-p[1]*VS-CT]);}
  ctx.moveTo(P[0][0],P[0][1]);
  for(var i=0;i<P.length-1;i++){var p0=P[Math.max(0,i-1)],p1=P[i],p2=P[i+1],p3=P[Math.min(P.length-1,i+2)];
    ctx.bezierCurveTo(p1[0]+(p2[0]-p0[0])/6,p1[1]+(p2[1]-p0[1])/6,p2[0]-(p3[0]-p1[0])/6,p2[1]-(p3[1]-p1[1])/6,p2[0],p2[1]);}
  ctx.closePath();
  ctx.fillStyle='#fff';ctx.fill();
  ctx.restore();
  var id=ctx.getImageData(0,0,W,H),d=id.data;
  for(var j=0;j<H;j++){for(var i2=0;i2<W;i2++){
    var k=(j*W+i2)*4; var a=d[k+3]; if(a==0)continue;
    var R=0,G=0,B=0;
    for(var sy=0;sy<3;sy++)for(var sx=0;sx<3;sx++){
    var u=(i2+CL+(sx+0.5)/3-X0)/US, v=(Y0-(j+CT+(sy+0.5)/3))/VS;
    if(v<=0.001)v=0.001;
    var dd=6*u-16*v+12; var x=9*u/dd, y=4*v/dd;
    var c=rgbOf(x,y); var inG=(c[0]>=0&&c[1]>=0&&c[2]>=0);
    var r=Math.max(0,c[0]),g=Math.max(0,c[1]),b=Math.max(0,c[2]);
    var m=Math.max(r,g,b); if(m<=0)m=1;
    r/=m;g/=m;b/=m;
    if(!inG){r=gam(r)*DARK;g=gam(g)*DARK;b=gam(b)*DARK;}else{r=Math.pow(r,GI);g=Math.pow(g,GI);b=Math.pow(b,GI);}
    R+=r;G+=g;B+=b;}
    d[k]=R*255/9;d[k+1]=G*255/9;d[k+2]=B*255/9;
  }}
  ctx.putImageData(id,0,0);
}
var c2=document.getElementById('cie31');
if(c2&&c2.getContext){
  var ctx2=c2.getContext('2d');var W2=c2.width,H2=c2.height;
  var id2=ctx2.createImageData(W2,H2),e=id2.data;
  var xa=0.3127-0.027,xb=0.3127+0.027,ya=0.329-0.023,yb=0.329+0.023;
  for(var j=0;j<H2;j++){for(var i=0;i<W2;i++){
    var k=(j*W2+i)*4;
    var x=xa+(xb-xa)*(i+0.5)/W2, y=yb-(yb-ya)*(j+0.5)/H2;
    var c=rgbOf(x,y);var r=Math.max(0,c[0]),g=Math.max(0,c[1]),b=Math.max(0,c[2]);var m=Math.max(r,g,b);
    e[k]=gam(r/m)*255;e[k+1]=gam(g/m)*255;e[k+2]=gam(b/m)*255;e[k+3]=255;
  }}
  ctx2.putImageData(id2,0,0);
}
})();

</script>
</body></html>
